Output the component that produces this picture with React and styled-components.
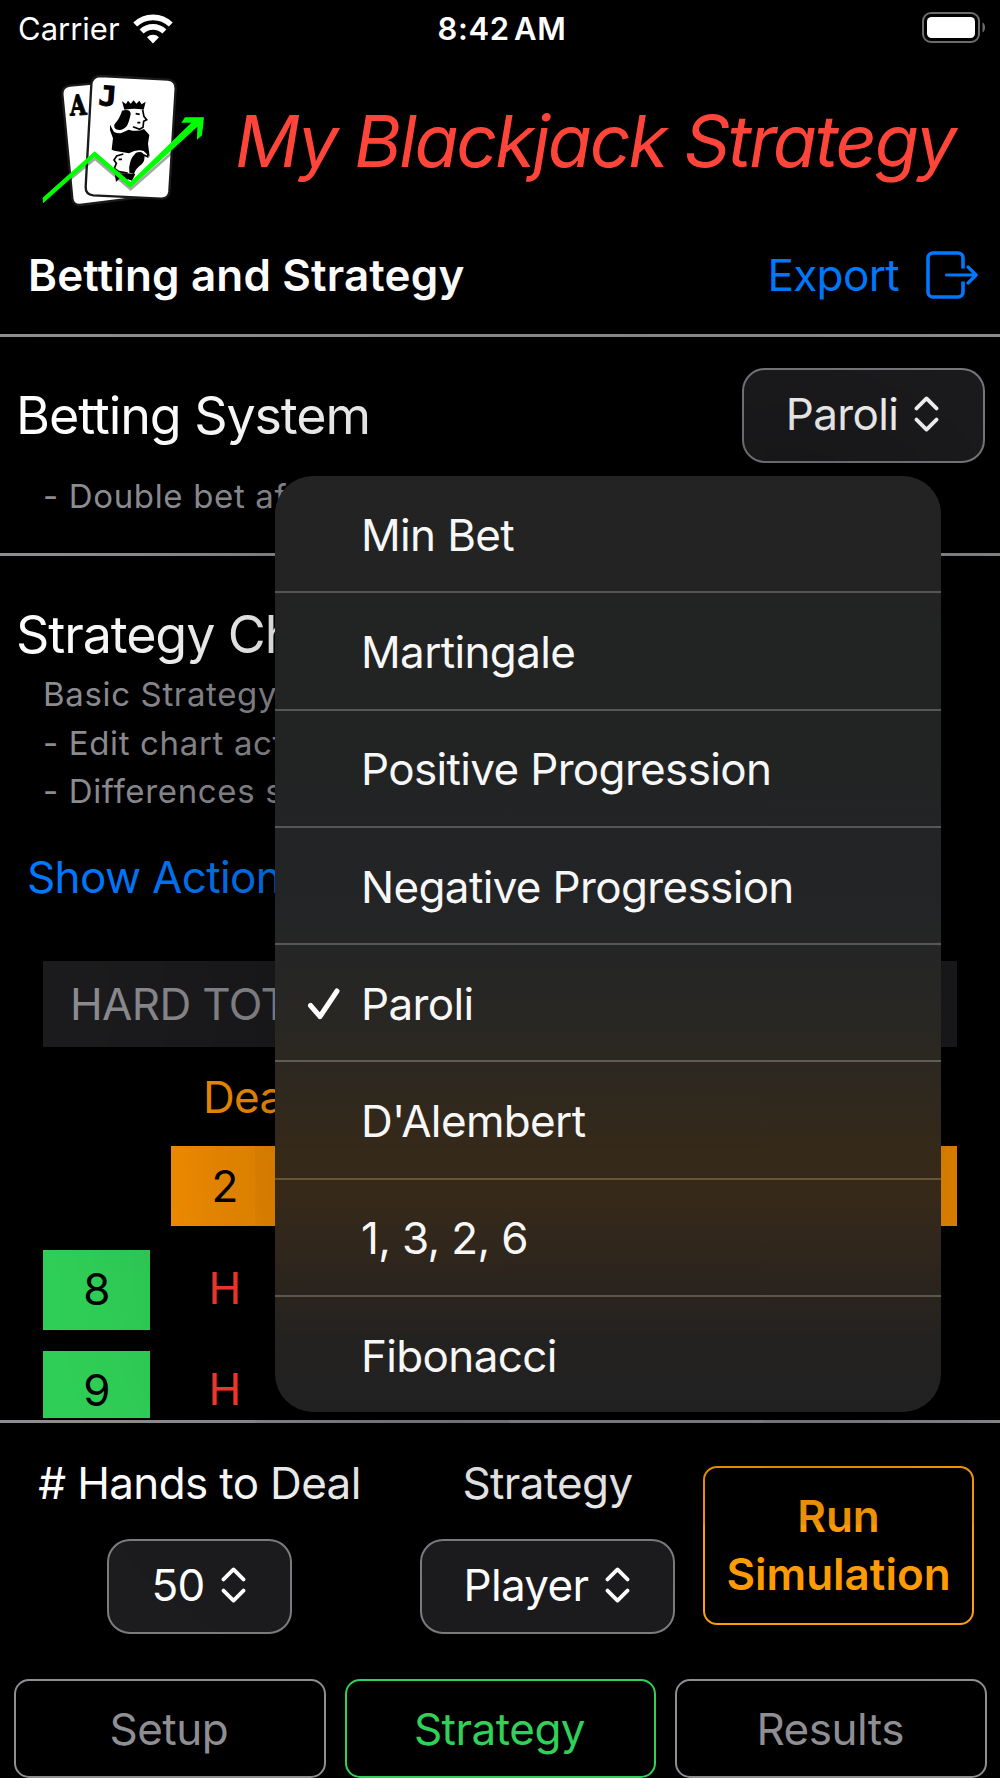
import React from "react";
import styled, { createGlobalStyle } from "styled-components";

const GlobalStyle = createGlobalStyle`
  * {
    box-sizing: border-box;
  }

  body {
    margin: 0;
    background: #000;
    font-family: Inter, "Liberation Sans", sans-serif;
    color: #fff;
  }
`;

const Screen = styled.div`
  position: relative;
  display: flex;
  flex-direction: column;
  width: 1000px;
  height: 1778px;
  overflow: hidden;
  background: #000;
`;

const Label = styled.span`
  font-size: ${({ size }) => size || 44}px;
  font-weight: ${({ weight }) => weight || 400};
  letter-spacing: ${({ spacing }) => (spacing === undefined ? -0.65 : spacing)}px;
  line-height: ${({ line }) => line || 50}px;
  color: ${({ color }) => color || "#fff"};
  white-space: nowrap;
`;

const StatusBar = styled.div`
  display: grid;
  grid-template-columns: 1fr auto 1fr;
  align-items: center;
  height: 56px;
  padding: 0 14px 4px 18px;
`;

const Carrier = styled.div`
  display: flex;
  align-items: center;
  gap: 13px;
  padding-top: 4px;
`;

const Clock = styled.div`
  display: flex;
  padding-top: 4px;
  word-spacing: -4px;
`;

const BatteryWrapper = styled.div`
  display: flex;
  justify-content: flex-end;
`;

const Header = styled.header`
  display: flex;
  align-items: center;
  height: 164px;
  padding: 4px 0 0 30px;

  svg {
    flex: none;
  }
`;

const Title = styled.h1`
  margin: 0 0 0 15px;
  padding-top: 2px;
  font-size: 72px;
  font-weight: 400;
  font-style: italic;
  letter-spacing: -2.25px;
  line-height: 88px;
  color: #ff453a;
  white-space: nowrap;
`;

const SubHeader = styled.div`
  display: flex;
  align-items: center;
  justify-content: space-between;
  height: 114px;
  padding: 0 22px 5px 28px;
`;

const ExportButton = styled.button`
  display: flex;
  align-items: center;
  gap: 27px;
  padding: 0;
  border: 0;
  background: none;
  font-family: inherit;
`;

const Divider = styled.div`
  flex: none;
  height: 3px;
  background: #8e8e93;
`;

const Betting = styled.section`
  height: 216px;
  padding: 31px 15px 0 16px;
`;

const BettingRow = styled.div`
  display: flex;
  align-items: center;
  justify-content: space-between;
`;

const PickerButton = styled.button`
  display: flex;
  align-items: center;
  justify-content: center;
  gap: 16px;
  width: ${({ width }) => width}px;
  height: 95px;
  padding: 0 2px 3px 0;
  border: 2px solid #7c7c80;
  border-radius: 23px;
  background: #1c1c1e;
  font-family: inherit;
`;

const Notes = styled.div`
  display: flex;
  flex-direction: column;
  padding-left: 27px;
  margin-top: ${({ top }) => top}px;
`;

const Chart = styled.section`
  display: flex;
  flex-direction: column;
  height: 864px;
  padding: 49px 43px 2px 16px;
`;

const ShowActions = styled.div`
  display: flex;
  padding-left: 11px;
  margin-top: 36px;
`;

const TotalsHeader = styled.div`
  display: flex;
  align-items: center;
  flex: none;
  height: 86px;
  margin: 59px 0 0 27px;
  padding-left: 27px;
  background: #1c1c1e;
`;

const DealerLabel = styled.div`
  display: flex;
  margin: 25px 0 24px 187px;
`;

const DealerCards = styled.div`
  display: flex;
  flex: none;
  height: 80px;
  margin-left: 155px;
  background: #ff9500;
`;

const Rows = styled.div`
  display: flex;
  flex-direction: column;
  flex: 1;
  gap: 21px;
  min-height: 0;
  margin: 24px 0 0 27px;
  overflow: hidden;
`;

const Row = styled.div`
  display: flex;
  flex: none;
  gap: 21px;
`;

const Cell = styled.div`
  display: flex;
  align-items: center;
  justify-content: center;
  width: 107px;
  height: 80px;
  padding-bottom: ${({ lift }) => lift || 0}px;
  background: ${({ fill }) => fill || "transparent"};
`;

const Controls = styled.section`
  display: flex;
  height: 256px;
  padding-top: 43px;
`;

const Field = styled.div`
  display: flex;
  flex-direction: column;
  align-items: center;
  gap: 31px;
  width: ${({ width }) => width}px;
  margin-left: ${({ left }) => left}px;
  margin-top: -8px;
`;

const RunButton = styled.button`
  width: 271px;
  height: 159px;
  margin-left: 28px;
  padding: 0 0 1px;
  border: 2.5px solid #ff9f0a;
  border-radius: 14px;
  background: none;
  font-family: inherit;
  font-size: 44px;
  font-weight: 600;
  line-height: 58px;
  color: #ff9d05;
`;

const Tabs = styled.nav`
  display: grid;
  grid-template-columns: repeat(3, 1fr);
  gap: 19px;
  height: 99px;
  padding: 0 13px 0 14px;
`;

const Tab = styled.button`
  padding: 0 2px 0 0;
  border: 2.5px solid ${({ active }) => (active ? "#30d158" : "#8e8e93")};
  border-radius: 15px;
  background: none;
  font-family: inherit;
  font-size: 44px;
  letter-spacing: -0.5px;
  color: ${({ active }) => (active ? "#30d158" : "#8e8e93")};
`;

const Menu = styled.ul`
  position: absolute;
  top: 476px;
  left: 275px;
  width: 666px;
  height: 936px;
  margin: 0;
  padding: 0;
  list-style: none;
  border-radius: 38px;
  overflow: hidden;
  background: linear-gradient(
    #232323 0%,
    #222323 30%,
    #232426 44%,
    #262625 54%,
    #2c2821 63%,
    #352919 72%,
    #36291a 77%,
    #2d251d 85%,
    #242220 92%,
    #212122 100%
  );
  box-shadow: 0 0 290px rgba(0, 0, 0, 0.52);
`;

const MenuItem = styled.li`
  display: grid;
  grid-template-columns: 33px auto;
  align-items: center;
  justify-content: start;
  column-gap: 21px;
  height: 117.3px;
  padding: 2px 0 0 32px;
  border-bottom: 2px solid ${({ line }) => line || "transparent"};

  svg {
    display: block;
  }
`;

const Wifi = () => (
  <svg width="40" height="30" viewBox="0 0 40 30" fill="none">
    <g stroke="#fff" strokeWidth="5.6">
      <path d="M2.200 10.600a25.500 25.500 0 0 1 35.600 0" />
      <path d="M8.600 17.600a16.200 16.200 0 0 1 22.800 0" />
    </g>
    <path d="M20 29.400l-6-6.200a8.600 8.600 0 0 1 12 0z" fill="#fff" />
  </svg>
);

const Battery = () => (
  <svg width="64" height="31" viewBox="0 0 64 31" fill="none">
    <rect x="1" y="1" width="56" height="29" rx="8" stroke="#6c6c6c" strokeWidth="2" />
    <rect x="5" y="5" width="48" height="21" rx="4.5" fill="#fff" />
    <path d="M60.500 10.500c3.400 1.600 3.400 8.400 0 10z" fill="#6c6c6c" />
  </svg>
);

const ExportIcon = () => (
  <svg width="52" height="48" viewBox="0 0 52 48" fill="none" stroke="#007aff" strokeWidth="3.6">
    <path d="M37 17.500V7a5 5 0 0 0-5-5H7a5 5 0 0 0-5 5v34a5 5 0 0 0 5 5h25a5 5 0 0 0 5-5V30.500" />
    <path d="M20.500 24H50M42 16l8.200 8-8.200 8" strokeWidth="3.2" strokeLinecap="round" strokeLinejoin="round" />
  </svg>
);

const Chevrons = () => (
  <svg width="25" height="36" viewBox="0 0 25 36" fill="none" stroke="#fff" strokeWidth="3.8" strokeLinecap="round" strokeLinejoin="round">
    <path d="M2.500 12.400l10-10 10 10M2.500 23.600l10 10 10-10" />
  </svg>
);

const Check = () => (
  <svg width="33" height="33" viewBox="0 0 33 33" fill="none" stroke="#fff" strokeWidth="5" strokeLinecap="round" strokeLinejoin="round">
    <path d="M3.500 18.500l9.500 11L30 4" />
  </svg>
);

const Logo = () => (
  <svg width="190" height="160" viewBox="0 0 570 480">
    <g stroke="#1b1919" strokeWidth="7">
      <path d="M120 77L300 60 330 412 150 435Q130 436 127 416L97 102Q96 80 120 77z" fill="#fff" />
      <path d="M212 48L414 59Q438 62 437 86L418 395Q416 416 394 416L190 406Q166 404 167 380L184 74Q186 48 212 48z" fill="#fff" />
    </g>
    <g fill="#000" stroke="#000" strokeWidth="3" fontWeight="700">
      <text x="119" y="165" fontSize="84" fontFamily="'DejaVu Serif', serif" textLength="50" lengthAdjust="spacingAndGlyphs" transform="rotate(-3 144 134)">A</text>
      <text x="206" y="137" fontSize="82" fontFamily="'DejaVu Sans Mono', monospace" textLength="54" lengthAdjust="spacingAndGlyphs" transform="rotate(4 234 108)">J</text>
    </g>
    <g fill="#000">
      <path d="M276 124l12 8 6-10 8 9 9-10 8 10 9-9 7 11 12-8-6 24q-28-6-58 0z" />
      <path d="M276 152q26-6 26 10-5 26-12 37-14 16-32 9-8-6-4-16 16-18 22-40z" />
      <path d="M240 194l12 22q14 6 24 2l20-9q26 8 46-2l16 18-4 26 5 39-18-17q-20-7-44 7l-44-8-8-3 4-34-9-24z" />
      <path d="M318 278q22-8 26 12 0 14-8 22-20 14-24 30l-14-4q-4-38 20-60z" />
      <path d="M254 340l4 26 12-12 10 12 14-8 12 4 10-20-26-2z" />
    </g>
    <g fill="none" stroke="#000" strokeWidth="5">
      <path d="M338 150l4 20 8 9-9 5-2 18-10 6-20-8M317 161l12 2M322 188h9" />
      <path d="M280 282l-20 6-8 12 7 10-6 15 14 10 26 4M266 298h10" />
      <path d="M340 284l13 6 2-16" />
    </g>
    <path d="M120 358L195 296l107 92L424 280" fill="none" stroke="#000" strokeOpacity="0.35" strokeWidth="8" />
    <path d="M38 413L194 274 301 366 484 188 454 188 465 172H522L516 226 501 239 502 200 301 384 194 292 39 430z" fill="#0f0" />
  </svg>
);

const gray = "#8e8e93";

const options = [
  { name: "Min Bet", line: "#555556" },
  { name: "Martingale", line: "#555657" },
  { name: "Positive Progression", line: "#555657" },
  { name: "Negative Progression", line: "#565758" },
  { name: "Paroli", line: "#625c50", selected: true },
  { name: "D'Alembert", line: "#6b532f" },
  { name: "1, 3, 2, 6", line: "#5f564a" },
  { name: "Fibonacci" },
];

const Picker = ({ value, width }) => (
  <PickerButton width={width}>
    <Label>{value}</Label>
    <Chevrons />
  </PickerButton>
);

const Note = ({ children }) => (
  <Label size={33} line={48.5} spacing={0.65} color={gray}>
    {children}
  </Label>
);

const App = () => (
  <>
    <GlobalStyle />
    <Screen>
      <StatusBar>
        <Carrier>
          <Label size={31} spacing={0}>Carrier</Label>
          <Wifi />
        </Carrier>
        <Clock>
          <Label size={31} weight={600} spacing={0.6}>8:42 AM</Label>
        </Clock>
        <BatteryWrapper>
          <Battery />
        </BatteryWrapper>
      </StatusBar>
      <Header>
        <Logo />
        <Title>My Blackjack Strategy</Title>
      </Header>
      <SubHeader>
        <Label weight={600} spacing={0.15}>Betting and Strategy</Label>
        <ExportButton>
          <Label color="#007aff">Export</Label>
          <ExportIcon />
        </ExportButton>
      </SubHeader>
      <Divider />
      <Betting>
        <BettingRow>
          <Label size={52} line={60} spacing={-1.1}>Betting System</Label>
          <Picker value="Paroli" width={243} />
        </BettingRow>
        <Notes top={9}>
          <Note>- Double bet after win</Note>
        </Notes>
      </Betting>
      <Divider />
      <Chart>
        <Label size={52} line={60} spacing={-1.1}>Strategy Chart</Label>
        <Notes top={5}>
          <Note>Basic Strategy</Note>
          <Note>- Edit chart actions</Note>
          <Note>- Differences shown</Note>
        </Notes>
        <ShowActions>
          <Label color="#007aff">Show Actions</Label>
        </ShowActions>
        <TotalsHeader>
          <Label color={gray}>HARD TOTALS</Label>
        </TotalsHeader>
        <DealerLabel>
          <Label color="#ff9500">Dealer</Label>
        </DealerLabel>
        <DealerCards>
          {["2", "3", "4"].map((card) => (
            <Cell key={card}>
              <Label color="#000">{card}</Label>
            </Cell>
          ))}
        </DealerCards>
        <Rows>
          {["8", "9"].map((total) => (
            <Row key={total}>
              <Cell fill="#30d158" lift={2}>
                <Label color="#000">{total}</Label>
              </Cell>
              <Cell lift={4}>
                <Label color="#ff3b30">H</Label>
              </Cell>
            </Row>
          ))}
        </Rows>
      </Chart>
      <Divider />
      <Controls>
        <Field width={321} left={39}>
          <Label># Hands to Deal</Label>
          <Picker value="50" width={185} />
        </Field>
        <Field width={255} left={60}>
          <Label>Strategy</Label>
          <Picker value="Player" width={255} />
        </Field>
        <RunButton>
          Run
          <br />
          Simulation
        </RunButton>
      </Controls>
      <Tabs>
        <Tab>Setup</Tab>
        <Tab active>Strategy</Tab>
        <Tab>Results</Tab>
      </Tabs>
      <Menu>
        {options.map(({ name, line, selected }) => (
          <MenuItem key={name} line={line}>
            <span>{selected && <Check />}</span>
            <Label color="#f7f7f7">{name}</Label>
          </MenuItem>
        ))}
      </Menu>
    </Screen>
  </>
);

export default App;
